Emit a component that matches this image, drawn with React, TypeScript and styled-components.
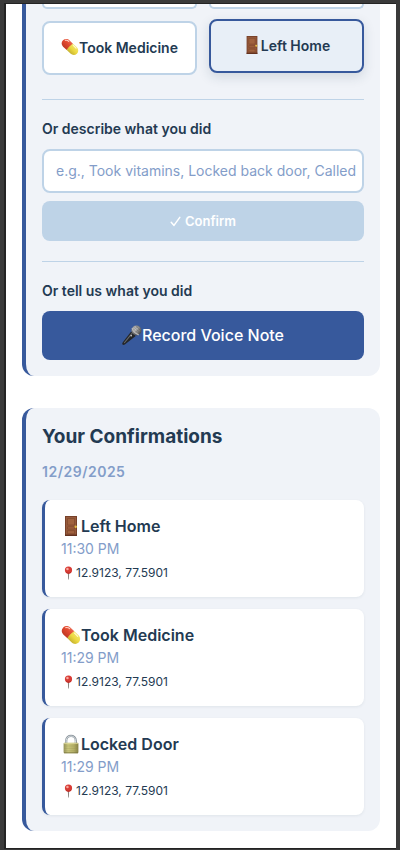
import React from "react";
import styled, { createGlobalStyle, css } from "styled-components";

const navy = "#233a52";
const blue = "#37599c";
const pale = "#bed3e7";
const muted = "#839dc9";
const surface = "#f0f3f8";

const GlobalStyle = createGlobalStyle`
  *, *::before, *::after { box-sizing: border-box; }
  html { background: #3a3a3a; }
  body { margin: 0; color: ${navy}; font-family: Inter, "Liberation Sans", sans-serif; }
  button, input { font-family: inherit; }
  h2, h3, p { margin: 0; }
`;

const Frame = styled.div`
  min-height: 100vh;
  padding: 3px 4px 1px;
  background: #3a3a3a;
`;

const Screen = styled.main`
  display: flex;
  flex-direction: column;
  gap: 32px;
  min-height: calc(100vh - 4px);
  padding: 0 16px 16px;
  background: #fff;
  border: solid #232323;
  border-width: 1px 0 1px 2px;
`;

const Card = styled.section<{ $continued?: boolean }>`
  display: flex;
  flex-direction: column;
  padding: ${(p) => (p.$continued ? "0 16px 16px" : "16px")};
  background: ${surface};
  border-left: 4px solid ${blue};
  border-radius: ${(p) => (p.$continued ? "0 0 12px 12px" : "12px")};
`;

const ActionGrid = styled.div`
  display: grid;
  grid-template-columns: 1fr 1fr;
  gap: 12px;
`;

const ActionEdge = styled.div`
  height: 5px;
  background: #fff;
  border: 2px solid ${pale};
  border-top: 0;
  border-radius: 0 0 8px 8px;
`;

const ActionButton = styled.button<{ $selected?: boolean }>`
  display: flex;
  align-items: center;
  justify-content: center;
  height: 54px;
  padding: 0 12px 2px;
  color: ${navy};
  font-size: 14px;
  font-weight: 600;
  background: #fff;
  border: 2px solid ${pale};
  border-radius: 8px;
  ${(p) =>
    p.$selected &&
    css`
      background: #e8eff7;
      border-color: ${blue};
      box-shadow: 0 4px 12px rgba(35, 58, 82, 0.15);
      transform: translateY(-2px);
    `}
`;

const Group = styled.div`
  display: flex;
  flex-direction: column;
  gap: 8px;
  padding-top: 20px;
  margin-top: 20px;
  border-top: 1px solid ${pale};
`;

const FirstGroup = styled(Group)`
  margin-top: 24px;
`;

const Label = styled.label`
  padding-bottom: 3px;
  font-size: 14px;
  line-height: 18px;
  font-weight: 600;
`;

const TextField = styled.input`
  width: 100%;
  height: 44px;
  padding: 0 4px 2px 12px;
  color: ${navy};
  font-size: 14px;
  background: #fff;
  border: 2px solid ${pale};
  border-radius: 8px;
  &::placeholder { color: ${muted}; opacity: 1; }
`;

const ConfirmButton = styled.button`
  display: flex;
  align-items: center;
  justify-content: center;
  gap: 4px;
  height: 40px;
  color: #fff;
  font-size: 13px;
  font-weight: 600;
  background: ${pale};
  border: 0;
  border-radius: 8px;
`;

const VoiceButton = styled.button`
  display: flex;
  align-items: center;
  justify-content: center;
  height: 49px;
  padding-bottom: 2px;
  color: #fff;
  font-size: 16px;
  font-weight: 500;
  background: ${blue};
  border: 0;
  border-radius: 8px;
`;

const Title = styled.h2`
  font-size: 19px;
  line-height: 26px;
  font-weight: 700;
`;

const DateHeading = styled.h3`
  margin: 10px 0 16px;
  color: ${muted};
  font-size: 14px;
  line-height: 24px;
  font-weight: 600;
  letter-spacing: 0.5px;
`;

const List = styled.ul`
  display: flex;
  flex-direction: column;
  gap: 12px;
  margin: 0;
  padding: 0;
  list-style: none;
`;

const Item = styled.li`
  display: flex;
  flex-direction: column;
  padding: 15px 16px 13px;
  background: #fff;
  border-left: 3px solid ${blue};
  border-radius: 8px;
  box-shadow: 0 1px 3px rgba(35, 58, 82, 0.08);
`;

const ItemName = styled.p`
  display: flex;
  align-items: center;
  font-size: 16px;
  line-height: 22px;
  font-weight: 600;
`;

const Time = styled.p`
  color: ${muted};
  font-size: 14px;
  line-height: 24px;
`;

const Place = styled.p`
  display: flex;
  align-items: center;
  margin-top: 1px;
  font-size: 12px;
  line-height: 22px;
`;

const Glyph = styled.svg<{ $size: number }>`
  flex: none;
  width: ${(p) => p.$size}px;
  height: ${(p) => p.$size}px;
`;

type IconProps = { size: number };

const Pill = ({ size }: IconProps) => (
  <Glyph $size={size} viewBox="0 0 20 20" aria-hidden="true">
    <defs>
      <linearGradient id="pillRed" x1="0" y1="1" x2="1" y2="0">
        <stop offset="0" stopColor="#a92e1c" />
        <stop offset=".55" stopColor="#e2492f" />
        <stop offset="1" stopColor="#f0836c" />
      </linearGradient>
      <linearGradient id="pillYellow" x1="0" y1="1" x2="1" y2="0">
        <stop offset="0" stopColor="#a89422" />
        <stop offset=".5" stopColor="#ecd941" />
        <stop offset="1" stopColor="#f7ef8c" />
      </linearGradient>
    </defs>
    <path d="M2.2 2.6C4.5.5 7.6.7 9.6 2.7L13.3 6.3 6.4 13.3 2.3 9.6C.3 7.6.1 4.7 2.2 2.6Z" fill="url(#pillRed)" />
    <path d="M13.3 6.3L17.6 10.3C19.6 12.4 19.8 15.4 17.7 17.5 15.5 19.5 12.5 19.3 10.5 17.3L6.4 13.3C8.2 10.2 10.3 8 13.3 6.3Z" fill="url(#pillYellow)" />
    <path d="M4.8 2.6Q7 2.1 8.6 3.7" fill="none" stroke="#ffd0c3" strokeWidth="1.2" strokeLinecap="round" />
    <path d="M13.6 8.2L16.7 11.3" fill="none" stroke="#fffbd0" strokeWidth="1.2" strokeLinecap="round" />
  </Glyph>
);

const Door = ({ size }: IconProps) => (
  <Glyph $size={size} viewBox="0 0 20 20" aria-hidden="true">
    <path d="M4 0H16V20H4Z" fill="#774129" />
    <path d="M5 1H15V19H5Z" fill="#965a3c" />
    <path d="M6.5 2.5H13.5V9H6.5ZM6.5 10.8H13.5V13H6.5ZM6.5 14.6H13.5V17.8H6.5Z" fill="#a0623f" stroke="#7c4429" strokeWidth=".6" />
    <path d="M4 19.2H16" stroke="#60301f" strokeWidth="1.3" />
    <circle cx="14.7" cy="10.8" r="1.2" fill="#e3bd48" />
  </Glyph>
);

const Lock = ({ size }: IconProps) => (
  <Glyph $size={size} viewBox="0 0 20 20" aria-hidden="true">
    <defs>
      <linearGradient id="lockBody" x1="0" y1="0" x2="1" y2="0">
        <stop offset="0" stopColor="#96935a" />
        <stop offset=".3" stopColor="#cbc87d" />
        <stop offset=".7" stopColor="#b5b068" />
        <stop offset="1" stopColor="#858044" />
      </linearGradient>
    </defs>
    <path d="M5.2 10V6.7C5.2 .3 14.8 .3 14.8 6.7V10" fill="none" stroke="#8b949b" strokeWidth="2.2" />
    <path d="M5.2 9V6.7C5.2 .5 14.5 .5 14.5 6.7V9" fill="none" stroke="#d7dee2" strokeWidth="1" />
    <rect x="2.6" y="8.8" width="14.8" height="10.4" rx="1" fill="url(#lockBody)" />
    <path d="M3 9.4H17" stroke="#dfdca0" strokeWidth=".8" />
    <path d="M3 12H17M3 14.4H17M3 16.8H17" stroke="#918c4e" strokeWidth=".5" opacity=".55" />
    <path d="M3 18.8H17" stroke="#77733e" strokeWidth=".8" />
  </Glyph>
);

const Microphone = ({ size }: IconProps) => (
  <Glyph $size={size} viewBox="0 0 20 20" aria-hidden="true">
    <defs>
      <radialGradient id="micHead" cx=".4" cy=".3" r=".7">
        <stop offset="0" stopColor="#d0d0d0" />
        <stop offset=".5" stopColor="#8c8c8c" />
        <stop offset="1" stopColor="#484848" />
      </radialGradient>
    </defs>
    <path d="M9.2 6.6L13.7 10.9 2.8 19.5Q1.1 20.3.5 19.4-.1 18.5.8 17.2Z" fill="#242628" />
    <path d="M10 8.3L2.2 18" stroke="#686a6c" strokeWidth="1.1" />
    <circle cx="14.4" cy="5.5" r="5" fill="url(#micHead)" />
    <path d="M10.2 3.2Q11.3 7.6 16.7 9.9" fill="none" stroke="#b9b9b9" strokeWidth="1.4" />
    <path d="M12 1.7L18 7.8M14 1L19 6M11.3 5L16.5 1.2M13.2 7.3L18.8 3.2" stroke="#4f5152" strokeWidth=".3" />
    <circle cx="9.2" cy="10.8" r=".8" fill="#dedede" />
  </Glyph>
);

const Pin = ({ size }: IconProps) => (
  <Glyph $size={size} viewBox="0 0 20 20" aria-hidden="true">
    <path d="M9.1 8H10.9L10.5 18H9.5Z" fill="#8c8582" />
    <circle cx="10" cy="5.4" r="4.8" fill="#d83c35" />
    <path d="M6 7.3Q9.5 10.6 14 7.3 12.8 10.1 10 10.2 7.2 10.1 6 7.3Z" fill="#ae2923" />
    <circle cx="8.6" cy="4" r="1.7" fill="#f6aaa0" />
  </Glyph>
);

const Check = () => (
  <Glyph $size={11} viewBox="0 0 11 11" aria-hidden="true">
    <path d="M1.2 6.3L4 9.4 9.8 1.4" fill="none" stroke="#fff" strokeWidth="1.5" strokeLinecap="round" strokeLinejoin="round" />
  </Glyph>
);

const confirmations = [
  { name: "Left Home", time: "11:30 PM", Icon: Door },
  { name: "Took Medicine", time: "11:29 PM", Icon: Pill },
  { name: "Locked Door", time: "11:29 PM", Icon: Lock },
];

export default function App() {
  return (
    <>
      <GlobalStyle />
      <Frame>
        <Screen>
          <Card $continued>
            <ActionGrid>
              <ActionEdge />
              <ActionEdge />
              <ActionButton type="button"><Pill size={18} />Took Medicine</ActionButton>
              <ActionButton type="button" $selected aria-pressed="true"><Door size={18} />Left Home</ActionButton>
            </ActionGrid>
            <FirstGroup>
              <Label htmlFor="activity">Or describe what you did</Label>
              <TextField id="activity" placeholder="e.g., Took vitamins, Locked back door, Called" />
              <ConfirmButton type="button"><Check />Confirm</ConfirmButton>
            </FirstGroup>
            <Group>
              <Label htmlFor="voice">Or tell us what you did</Label>
              <VoiceButton id="voice" type="button"><Microphone size={20} />Record Voice Note</VoiceButton>
            </Group>
          </Card>
          <Card>
            <Title>Your Confirmations</Title>
            <DateHeading>12/29/2025</DateHeading>
            <List>
              {confirmations.map(({ name, time, Icon }) => (
                <Item key={name}>
                  <ItemName><Icon size={20} />{name}</ItemName>
                  <Time>{time}</Time>
                  <Place><Pin size={15} />12.9123, 77.5901</Place>
                </Item>
              ))}
            </List>
          </Card>
        </Screen>
      </Frame>
    </>
  );
}
